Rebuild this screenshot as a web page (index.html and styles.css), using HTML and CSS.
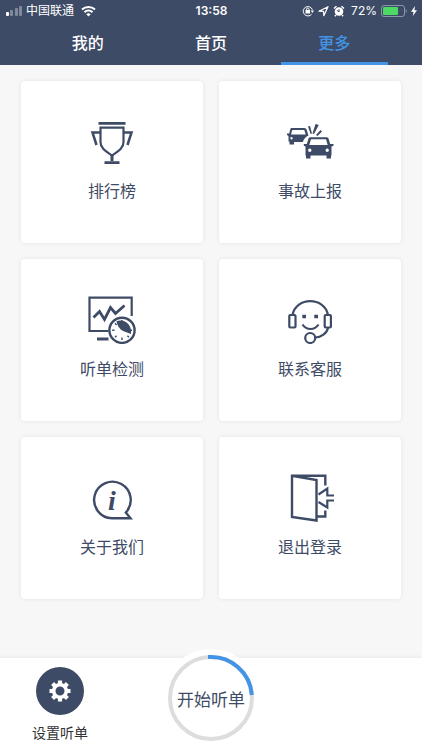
FILE: index.html
```
<!DOCTYPE html>
<html lang="zh-CN">
<head>
    <meta charset="UTF-8">
    <meta name="viewport" content="width=device-width, initial-scale=1.0">
    <title>更多</title>
    <link rel="stylesheet" href="styles.css">
</head>
<body>
    <header class="header">
        <div class="status-bar">
            <div class="status-left">
                <svg class="signal" width="17" height="12" viewBox="0 0 17 12" fill="#fff">
                    <rect x="0" y="7" width="3" height="4" rx="1"/>
                    <g opacity="0.35">
                        <rect x="4" y="5" width="3" height="6" rx="1"/>
                        <rect x="9" y="3" width="3" height="8" rx="1"/>
                        <rect x="13" y="1" width="3" height="10" rx="1"/>
                    </g>
                </svg>
                <span>中国联通</span>
                <svg class="wifi" width="15" height="12" viewBox="0 0 15 12" fill="none" stroke="#fff" stroke-width="2">
                    <path d="M1 4.5C4.6 1 10.4 1 14 4.5M3.5 7.2C5.7 5 9.3 5 11.5 7.2"/>
                    <path d="M7.5 11.5 5.3 9.2C6.5 8 8.5 8 9.7 9.2Z" fill="#fff" stroke="none"/>
                </svg>
            </div>
            <span class="time">13:58</span>
            <div class="status-right">
                <svg width="12" height="12" viewBox="0 0 12 12" fill="none" stroke="#fff">
                    <path d="M9.6 9.2A4.7 4.7 0 1 1 10.4 4.8"/>
                    <path d="M8.6 5.5H12L10.4 8Z" fill="#fff" stroke="none"/>
                    <rect x="3.5" y="5" width="4.5" height="3.5" fill="#fff" stroke="none"/>
                    <path d="M4.5 5.5V4.3a1.2 1.2 0 0 1 2.5 0V5.5"/>
                </svg>
                <svg width="11" height="12" viewBox="0 0 11 12" fill="none" stroke="#fff" stroke-width="1.2" stroke-linejoin="round">
                    <path d="M1 6.200 10 1.700 5.800 10.700 5.600 6.300Z"/>
                </svg>
                <svg width="12" height="12" viewBox="0 0 12 12">
                    <circle cx="6" cy="6.5" r="4.3" fill="#fff"/>
                    <path d="M1 3.5 3.5 1.3M8.5 1.3 11 3.5M3 10l-1 1.3M9 10l1 1.3" stroke="#fff" stroke-width="1.5"/>
                    <path d="M6 7V4.2M6 6.7 4 5.5" stroke="#3e4b66" fill="none"/>
                </svg>
                <span>72%</span>
                <svg width="26" height="12" viewBox="0 0 26 12">
                    <rect x="0.5" y="0.5" width="23" height="11" rx="2.5" fill="none" stroke="#8d96a7"/>
                    <rect x="2" y="2" width="15" height="8" rx="1" fill="#4cd964"/>
                    <path d="M24.700 4c1.300.5 1.300 3.500 0 4Z" fill="#8d96a7"/>
                </svg>
                <svg width="6" height="12" viewBox="0 0 6 12" fill="#fff">
                    <path d="M4 1 0 6.700H2.500L1.800 11 6 5.200H3.400Z"/>
                </svg>
            </div>
        </div>
        <nav class="tabs">
            <a class="tab" href="#mine">我的</a>
            <a class="tab" href="#home">首页</a>
            <a class="tab active" href="#more">更多</a>
        </nav>
    </header>

    <main class="menu">
        <a class="card" href="#rank">
            <svg class="icon" viewBox="0 0 48 48">
                <path d="M10.500 5.300H37.500M16.500 44.700H31.500" stroke-width="2.800"/>
                <path d="M12.500 9.700H35.500V24C35.500 31 29 34 24 37.500C19 34 12.500 31 12.500 24Z"/>
                <path d="M24 37V43" stroke-width="3"/>
                <path d="M12.500 14.500H4.500L8.500 27M35.500 14.500H43.500L39.500 27" stroke-width="2.500"/>
            </svg>
            <span>排行榜</span>
        </a>
        <a class="card" href="#accident">
            <svg class="icon solid" viewBox="0 0 48 48">
                <path fill-rule="evenodd" d="M5.500 10H18.500Q20 10 20.600 11.500L22.500 17.500Q18.500 19 16.800 24H8V26.500H3.500V23.500H2.500V18L1 17V15.500H3.200L4.300 11.300Q4.600 10 5.500 10ZM6.200 12 5 16.500H19.700L18.300 12ZM5.500 19A1.200 1.200 0 1 0 5.500 21.400A1.200 1.200 0 1 0 5.500 19Z"/>
                <path fill-rule="evenodd" d="M24.500 19.200H40.500Q42 19.200 42.500 20.600L44.200 26H47.500V27.800L45.500 28.500V37.500H45V40.500H40.500V37.500H24.500V40.500H20V37.500H19.500V28.500L17.800 27.800V26H20.800L22.500 20.600Q23 19.200 24.500 19.200ZM25 21.300 23.300 27H41.700L40 21.300ZM23.800 30.500A1.700 1.700 0 1 0 23.800 33.900A1.700 1.700 0 1 0 23.800 30.500ZM41.200 30.500A1.700 1.700 0 1 0 41.200 33.900A1.700 1.700 0 1 0 41.200 30.500Z"/>
                <path d="M22 8.500 24 8 26 15.500 24.600 16ZM29.500 6 32.800 7 28 16 26.500 15.500ZM34.500 12 36 13.500 31.500 18 30 17Z"/>
            </svg>
            <span>事故上报</span>
        </a>
        <a class="card" href="#check">
            <svg class="icon" viewBox="0 0 48 48">
                <path d="M20.500 35H1.500V1.700H43.700V20" stroke-width="2.200"/>
                <path d="M9 43H20.500" stroke-width="3"/>
                <path d="M5.500 21.500 11.500 15.500 16.500 23.500 22.500 11.500 27.500 17.500 36.500 9.500" stroke-width="2.800"/>
                <circle cx="34" cy="34.300" r="12.600" stroke-width="2.400"/>
                <path d="M34 24V26M34 41.500V44M24.200 34.300H26.500M41.500 34.300H44M27 27.300 28.500 28.900M27 41.300 28.600 39.700M41 41.300 39.400 39.700" stroke-width="1.400"/>
                <path class="fill" d="M28.500 25.200C37 22.500 44 29 43 38L35 35C31.500 33 29 29.500 28.500 25.200Z"/>
            </svg>
            <span>听单检测</span>
        </a>
        <a class="card" href="#service">
            <svg class="icon" viewBox="0 0 48 48">
                <path d="M6.500 19C10 .5 38.500 .5 42 19M42 32C41 37 35 41.500 29.300 41.500"/>
                <rect x="3.300" y="19" width="6.200" height="12.500" rx="1"/>
                <rect x="38.700" y="19" width="6.200" height="12.500" rx="1"/>
                <path class="fill" d="M16.300 18.800h3.700v3.500h-3.700ZM28.300 18.800h3.700v3.500h-3.700Z"/>
                <path d="M16.500 28.500C20.500 34.500 28.500 34.500 32.500 28.500"/>
                <circle cx="24.200" cy="42" r="5"/>
            </svg>
            <span>联系客服</span>
        </a>
        <a class="card" href="#about">
            <svg class="icon" viewBox="0 0 48 48">
                <path d="M24 44.300A18.300 18.300 0 1 1 37.800 38.500L42.500 44.300Z" stroke-width="2.400"/>
                <text class="info" x="24" y="35.500" text-anchor="middle">i</text>
            </svg>
            <span>关于我们</span>
        </a>
        <a class="card" href="#logout">
            <svg class="icon" viewBox="0 0 48 48">
                <path d="M6 1.800 30.500 6V46.500L6 43ZM6 1.800H39.300V11.500M39.300 36.500V42.500H30.500" stroke-width="2.400"/>
                <path d="M32.500 20.500 41.300 14.500V21.500H48M48 26.500H41.300V33.500L32.500 28" stroke-width="2.200"/>
            </svg>
            <span>退出登录</span>
        </a>
    </main>

    <footer class="footer">
        <button class="setting">
            <span class="setting-icon">
                <svg width="22" height="22" viewBox="-11 -11 22 22" fill="none" stroke="#fff">
                    <circle r="6.300" stroke-width="3.600"/>
                    <path d="M0-7V-10.500M0 7V10.500M-7 0H-10.500M7 0H10.500M-5-5-7.400-7.400M5-5 7.400-7.400M-5 5-7.400 7.400M5 5 7.400 7.400" stroke-width="4.200"/>
                </svg>
            </span>
            <span>设置听单</span>
        </button>
        <button class="start">
            <svg class="ring" viewBox="0 0 98 98" fill="none" stroke-width="4">
                <circle cx="49" cy="49" r="41" stroke="#ddd"/>
                <path d="M46 8.100A41 41 0 0 1 89.900 46" stroke="#4394e5"/>
            </svg>
            <span>开始听单</span>
        </button>
    </footer>
</body>
</html>
```
FILE: styles.css
```
* {
    box-sizing: border-box;
}
body {
    display: flex;
    flex-direction: column;
    min-height: 100vh;
    margin: 0;
    background-color: #f7f7f7;
    color: #3e4b66;
    font-family: Inter, "Noto Sans CJK SC", sans-serif;
}
a {
    color: inherit;
    text-decoration: none;
}
button {
    padding: 0;
    border: none;
    background: none;
    color: inherit;
    font-family: inherit;
    cursor: pointer;
}
svg {
    display: block;
}
.header {
    background-color: #3e4b66;
    color: #fff;
}
.status-bar {
    display: grid;
    grid-template-columns: 1fr auto 1fr;
    align-items: center;
    height: 22px;
    padding: 0 5px 0 6px;
    font-size: 12px;
    line-height: 20px;
}
.status-left,
.status-right {
    display: flex;
    align-items: center;
    gap: 3px;
}
.wifi {
    margin-left: 4px;
}
.status-right {
    justify-content: flex-end;
    gap: 4px;
}
.status-right span {
    margin-left: 2px;
}
.time {
    font-weight: 600;
}
.tabs {
    display: flex;
    padding: 0 26px;
}
.tab {
    flex: 1;
    margin: 0 8px;
    height: 43px;
    border-bottom: 3px solid transparent;
    font-size: 16px;
    font-weight: 500;
    line-height: 42px;
    text-align: center;
}
.tab.active {
    border-color: #4394e5;
    color: #4394e5;
}
.menu {
    flex: 1;
    display: grid;
    grid-template-columns: 1fr 1fr;
    grid-auto-rows: 162px;
    gap: 16px;
    padding: 16px 21px;
}
.card {
    display: flex;
    flex-direction: column;
    align-items: center;
    gap: 13px;
    padding-top: 37px;
    border-radius: 4px;
    background-color: #fff;
    box-shadow: 0 0 5px rgba(0, 0, 0, 0.08);
    font-size: 16px;
    line-height: 24px;
}
.icon {
    width: 48px;
    height: 48px;
    fill: none;
    stroke: #3e4b66;
    stroke-width: 2.2;
}
.icon.solid,
.icon .fill {
    fill: #3e4b66;
    stroke: none;
}
.icon .info {
    fill: #3e4b66;
    stroke: none;
    font: italic bold 28px "Liberation Serif", serif;
}
.footer {
    display: grid;
    grid-template-columns: 1fr auto 1fr;
    align-items: start;
    height: 92px;
    background-color: #fff;
    box-shadow: 0 0 6px rgba(0, 0, 0, 0.08);
}
.setting {
    display: flex;
    flex-direction: column;
    align-items: center;
    gap: 8px;
    justify-self: start;
    margin-left: 32px;
    padding-top: 9px;
    color: #333;
    font-size: 14px;
    line-height: 20px;
}
.setting-icon {
    display: grid;
    place-items: center;
    width: 48px;
    height: 48px;
    border-radius: 50%;
    background-color: #3e4b66;
}
.start {
    display: grid;
    place-items: center;
    width: 98px;
    height: 98px;
    margin-top: -9px;
    border-radius: 50%;
    background-color: #fff;
    font-size: 17px;
}
.start > * {
    grid-area: 1 / 1;
}
.ring {
    width: 98px;
    height: 98px;
}
```
